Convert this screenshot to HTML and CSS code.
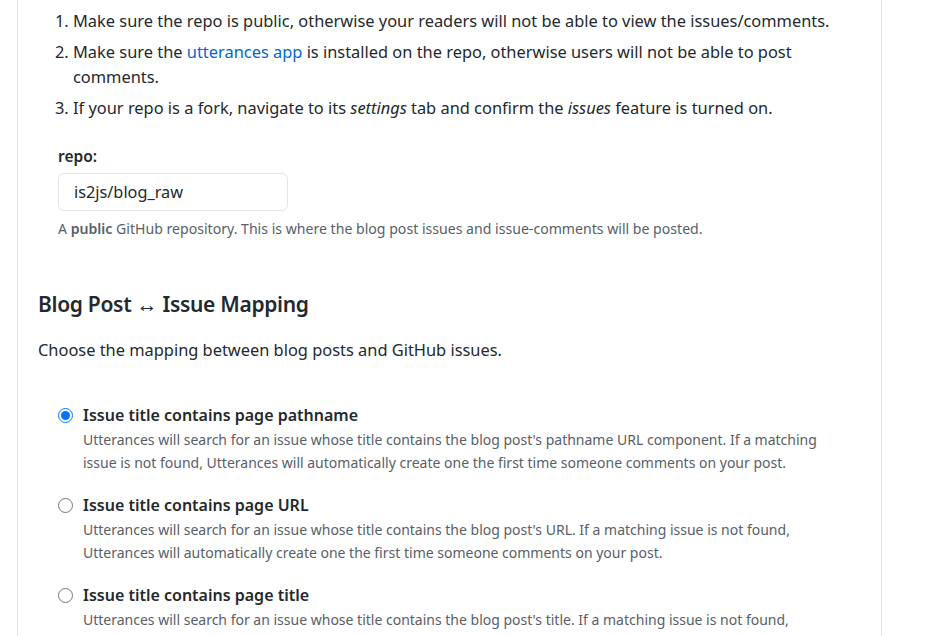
FILE: index.html
```html
<!DOCTYPE html>
<html lang="en">
<head>
<meta charset="utf-8">
<title>utterances</title>
<link rel="stylesheet" href="styles.css">
</head>
<body>
<main class="page">
  <ol class="steps">
    <li>Make sure the repo is public, otherwise your readers will not be able to view the issues/comments.</li>
    <li>Make sure the <a href="#">utterances app</a> is installed on the repo, otherwise users will not be able to post comments.</li>
    <li>If your repo is a fork, navigate to its <em>settings</em> tab and confirm the <em>issues</em> feature is turned on.</li>
  </ol>
  <div class="field">
    <label class="field-label" for="repo">repo:</label>
    <input class="field-input" id="repo" type="text" value="is2js/blog_raw">
    <p class="note">A <strong>public</strong> GitHub repository. This is where the blog post issues and issue-comments will be posted.</p>
  </div>

  <h3 class="section-title">Blog Post ↔ Issue Mapping</h3>
  <p class="lead">Choose the mapping between blog posts and GitHub issues.</p>

  <div class="options">
    <div class="option">
      <label class="option-label"><input type="radio" name="mapping" checked> Issue title contains page pathname</label>
      <p class="option-desc">Utterances will search for an issue whose title contains the blog post's pathname URL component. If a matching issue is not found, Utterances will automatically create one the first time someone comments on your post.</p>
    </div>
    <div class="option">
      <label class="option-label"><input type="radio" name="mapping"> Issue title contains page URL</label>
      <p class="option-desc">Utterances will search for an issue whose title contains the blog post's URL. If a matching issue is not found, Utterances will automatically create one the first time someone comments on your post.</p>
    </div>
    <div class="option">
      <label class="option-label"><input type="radio" name="mapping"> Issue title contains page title</label>
      <p class="option-desc">Utterances will search for an issue whose title contains the blog post's title. If a matching issue is not found, Utterances will automatically create one the first time someone comments on your post.</p>
    </div>
  </div>
</main>
</body>
</html>
```
FILE: styles.css
```css
html, body {
  margin: 0;
  padding: 0;
  background: #fff;
}
body {
  font-family: "Noto Sans", "Liberation Sans", sans-serif;
  color: #24292e;
  font-size: 16px;
  overflow: hidden;
  height: 636px;
}
.page {
  margin-left: 17px;
  width: 823px;
  border-left: 1px solid #e1e4e8;
  border-right: 1px solid #e1e4e8;
  padding: 8px 20px 0 20px;
  min-height: 700px;
}
.steps {
  margin: 0;
  padding-left: 35px;
  font-size: 16.4px;
  line-height: 25px;
}
.steps li + li {
  margin-top: 6px;
}
.steps a {
  color: #0366d6;
  text-decoration: none;
}
.field {
  margin: 24px 0 0 20px;
}
.field-label {
  display: block;
  font-weight: 600;
  font-size: 15.5px;
  line-height: 24px;
}
.field-input {
  display: block;
  margin-top: 5px;
  width: 230px;
  height: 38px;
  box-sizing: border-box;
  border: 1px solid #e1e4e8;
  border-radius: 6px;
  padding: 0 15px;
  font-family: inherit;
  font-size: 16.3px;
  color: #24292e;
  background: #fff;
}
.note {
  margin: 7px 0 0;
  font-size: 14.1px;
  line-height: 21px;
  color: #586069;
}
.note strong {
  color: #586069;
  font-weight: 600;
}
.section-title {
  margin: 50px 0 0;
  font-size: 21px;
  font-weight: 600;
  letter-spacing: -0.3px;
  line-height: 30px;
}
.lead {
  margin: 18px 0 0;
  font-size: 16.4px;
  line-height: 25px;
}
.options {
  margin: 41px 0 0 20px;
}
.option + .option {
  margin-top: 19px;
}
.option-label {
  display: flex;
  align-items: center;
  gap: 10px;
  font-weight: 600;
  line-height: 25px;
}
.option-label input {
  margin: 0;
  width: 15px;
  height: 15px;
}
.option-desc {
  margin: 0 0 0 25px;
  max-width: 745px;
  font-size: 14px;
  line-height: 23px;
  color: #586069;
}
```
